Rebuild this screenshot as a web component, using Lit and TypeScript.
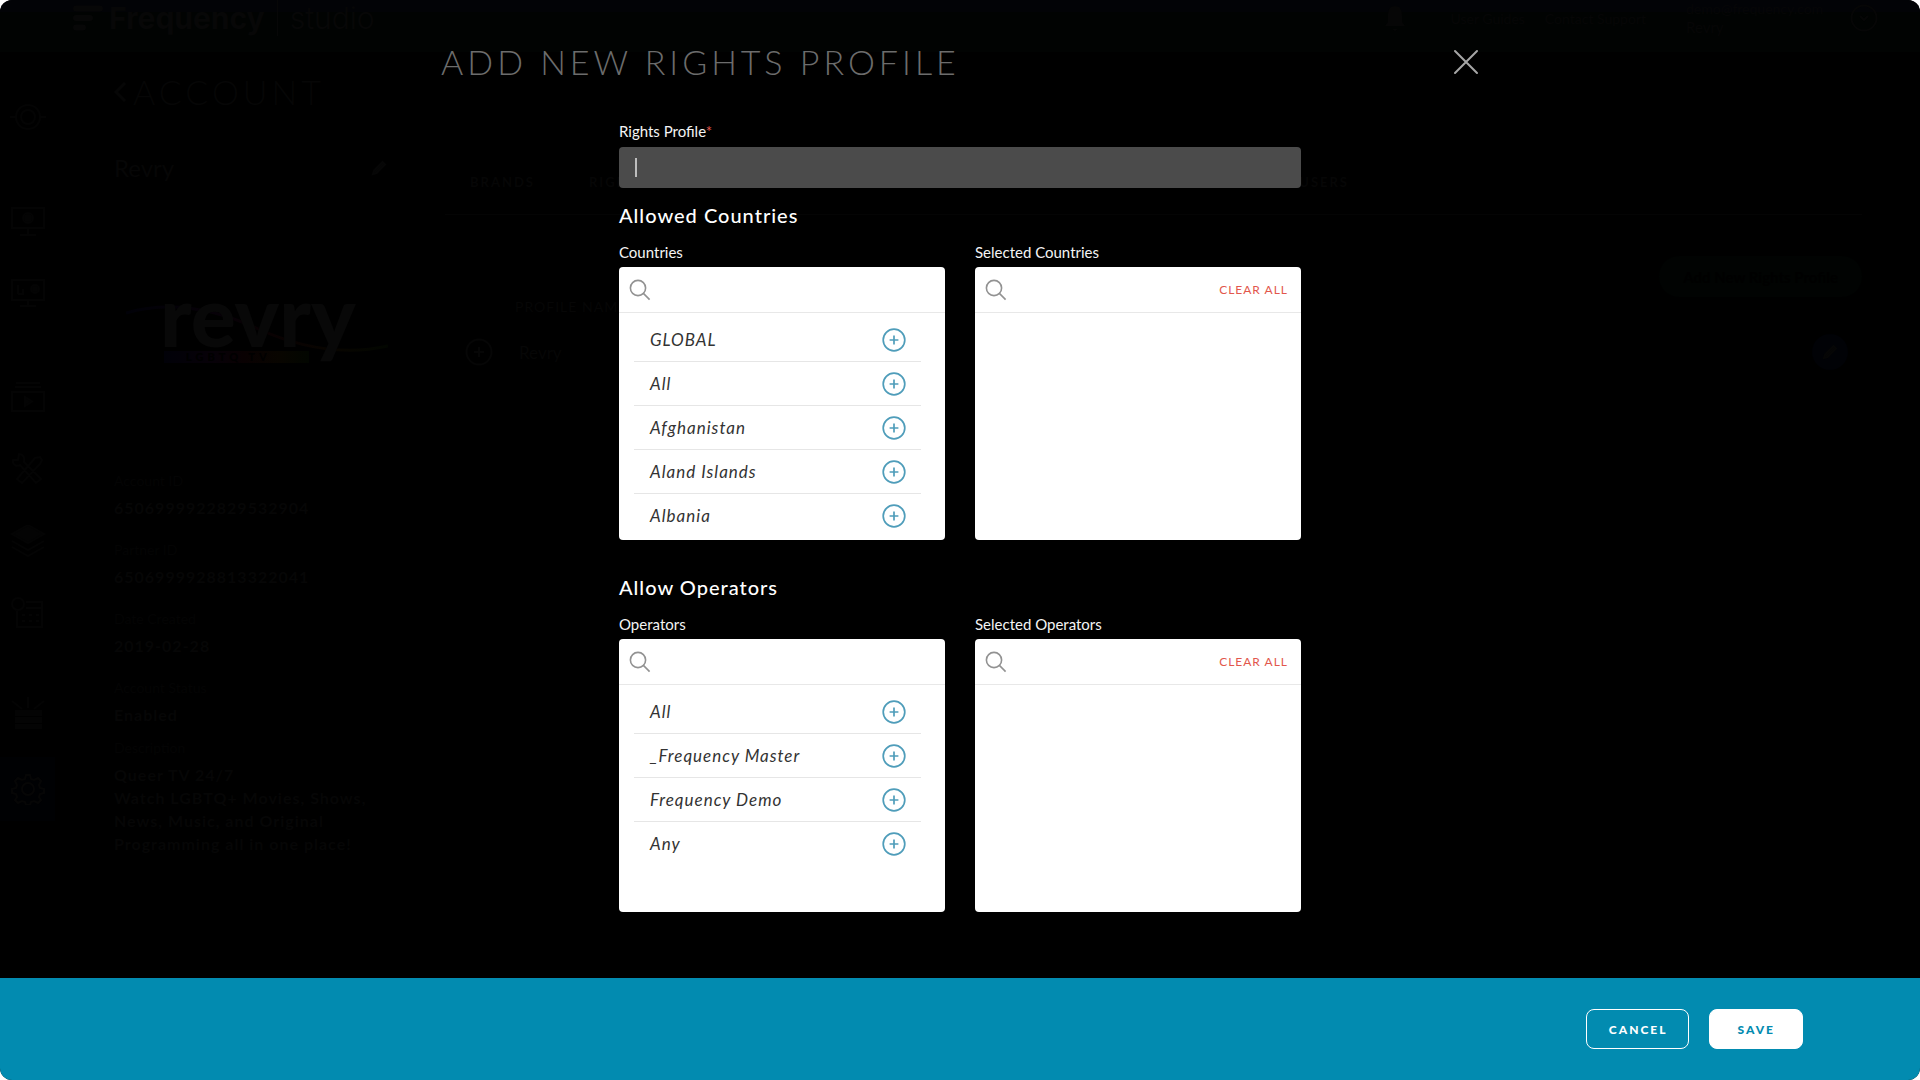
import { LitElement, html, css, svg } from "lit";
import { customElement, property } from "lit/decorators.js";

const searchIcon = html`<svg class="search-icon" width="22" height="22" viewBox="0 0 22 22" aria-hidden="true">
  <circle cx="9" cy="9" r="7.6"></circle><path d="M14.4 14.4 20.6 20.6"></path>
</svg>`;

const plusIcon = html`<svg width="24" height="24" viewBox="0 0 24 24" aria-hidden="true">
  <circle cx="12" cy="12" r="10.8"></circle><path d="M12 7.6v8.8M7.6 12h8.8"></path>
</svg>`;

const pencil = svg`<path d="M2 14 3 10.500 11.500 2 14 4.500 5.500 13Z" fill="currentColor"></path>`;

/* Side navigation glyphs, drawn on a 36 by 32 grid. */
const navIcons = [
  { name: "preview", art: svg`<circle cx="18" cy="16" r="12"></circle><circle cx="18" cy="16" r="7"></circle><path d="M0 16h6M30 16h6"></path>` },
  { name: "player", art: svg`<path d="M2 3h32v20H2zM18 23v6M10 30h16"></path><circle cx="18" cy="13" r="5" fill="currentColor"></circle>` },
  { name: "reports", art: svg`<path d="M2 3h32v20H2zM18 23v5M10 29h16M8 8v9M13 12v5M8 17h6M23 8v8"></path><circle cx="25" cy="12" r="4" fill="currentColor"></circle>` },
  { name: "videos", art: svg`<path d="M6 2h24M5 6h26M2 11h32v19H2z"></path><path d="M15 16v9l7-4.500z" fill="currentColor"></path>` },
  { name: "tools", art: svg`<path d="M9 1l-1 6-5 0C2 12 7 14 10 12l16 18 5-4L14 9C15 4 13 1 9 1zM7 26 25 5l5-1 2 3-2 4L12 30z"></path>` },
  { name: "library", art: svg`<path d="M18 0 34 9 18 18 2 9z" fill="currentColor"></path><path d="M2 16 18 25 34 16M2 22 18 31 34 22"></path>` },
  { name: "calendar", art: svg`<path d="M16 5h16v25H7V14M16 11h16M12 18h3M19 18h3M26 18h3M12 24h3M19 24h3M26 24h3"></path><circle cx="8" cy="7" r="6"></circle>` },
  { name: "data", art: svg`<path d="M18 0v11M2 4l10 8M34 4 24 12"></path><path d="M6 14h25v4H6zM6 21h25v4H6zM6 28h25v3H6z" fill="currentColor"></path>` },
  { name: "settings", art: svg`<path d="M16 2h4l1 4 3 1 4-2 3 3-2 4 1 3 4 1v4l-4 1-1 3 2 3-3 3-4-2-3 1-1 3h-4l-1-3-3-1-4 2-3-3 2-3-1-3-4-1v-4l4-1 1-3-2-4 3-3 4 2 3-1z"></path><circle cx="18" cy="16" r="6"></circle>` },
];

@customElement("picker-list")
export class PickerList extends LitElement {
  @property() label = "";
  @property({ type: Boolean }) clearable = false;
  @property({ attribute: false }) items: string[] = [];

  static styles = css`
    :host { display: block; font-family: Lato, "Open Sans", sans-serif; }
    .caption { display: block; font-size: 15px; line-height: 20px; margin-bottom: 5px; color: #f4f4f4; }
    .card { background: #fff; border-radius: 4px; min-height: 273px; color: #333; overflow: hidden; }
    .bar { display: flex; align-items: center; gap: 8px; height: 45px; padding: 0 13px 0 10px; border-bottom: 1px solid #e8e8e8; }
    .search-icon { flex: none; fill: none; stroke: #929292; stroke-width: 1.6; }
    .field { flex: 1; min-width: 0; height: 30px; border: 0; outline: 0; background: none; font: inherit; font-size: 16px; }
    .clear { border: 0; padding: 0; background: none; color: #e2574c; font: inherit; font-size: 12px; line-height: 16px; letter-spacing: 1px; cursor: pointer; }
    .rows { list-style: none; margin: 0; padding: 5px 24px 2px 15px; }
    .row { display: flex; align-items: center; justify-content: space-between; height: 43px; padding: 0 15px 0 16px; border-bottom: 1px solid #e6e6e6; font-size: 17px; font-style: italic; letter-spacing: 1px; }
    .row:last-child { border-bottom-color: transparent; }
    .add { display: flex; padding: 0; border: 0; background: none; color: #4f9dba; cursor: pointer; }
    .add svg { fill: none; stroke: currentColor; stroke-width: 1.7; }
  `;

  render() {
    return html`
      <label class="caption" for="q">${this.label}</label>
      <div class="card">
        <div class="bar">
          ${searchIcon}
          <input class="field" id="q" type="text" />
          ${this.clearable ? html`<button class="clear" type="button">CLEAR ALL</button>` : ""}
        </div>
        ${this.items.length
          ? html`<ul class="rows">
              ${this.items.map((item) => html`<li class="row"><span>${item}</span><button class="add" type="button" aria-label="Add ${item}">${plusIcon}</button></li>`)}
            </ul>`
          : ""}
      </div>
    `;
  }
}

@customElement("account-page")
export class AccountPage extends LitElement {
  static styles = css`
    :host { display: grid; grid-template-rows: 52px 1fr; font-family: Lato, "Open Sans", sans-serif; color: #060606; background: #000; }
    svg { fill: none; stroke: currentColor; stroke-width: 2; flex: none; }
    a { color: inherit; text-decoration: none; }
    button { font: inherit; color: inherit; border: 0; background: none; padding: 0; }
    .top { display: flex; align-items: flex-start; padding: 0 42px 0 73px; background: linear-gradient(#020306 12px, #010302 12px); }
    .brand { display: flex; align-items: center; height: 36px; gap: 6px; color: #070707; }
    .brand b { font: 700 30px/36px Inter, sans-serif; }
    .brand .product { margin-left: 6px; padding-left: 12px; border-left: 1px solid #070707; font: 300 30px/36px Inter, sans-serif; }
    .links { display: flex; align-items: center; height: 36px; margin-left: auto; font-size: 14px; }
    .links .bell { margin-right: 44px; }
    .links a { margin-right: 20px; }
    .who { display: flex; flex-direction: column; width: 164px; margin-left: 20px; font-size: 14px; line-height: 18px; }
    .who strong { font-size: 15px; font-weight: 400; }
    .body { display: grid; grid-template-columns: 55px 332px 1fr; }
    .nav { display: flex; flex-direction: column; padding-top: 33px; }
    .nav a { display: grid; place-items: center; height: 64px; color: #040404; }
    .nav a + a { margin-top: 8px; }
    .nav a.gap { margin-top: 40px; }
    .nav a.mid { margin-top: 36px; }
    .nav a.on { background: #000103; color: #060606; margin-top: 12px; }
    .side { padding-left: 59px; }
    .title { display: flex; align-items: center; gap: 6px; margin: 18px 0 0; font-weight: 300; font-size: 34px; line-height: 44px; letter-spacing: 4px; white-space: nowrap; }
    .name { display: flex; align-items: center; justify-content: space-between; margin: 38px 0 0; font-size: 24px; line-height: 32px; font-weight: 400; }
    .art { display: block; margin: 16px 0 0 12px; }
    .facts { margin: 9px 0 0; }
    .facts dt { font-size: 14px; line-height: 20px; color: #040404; }
    .facts dd { margin: 5px 0 20px; font-size: 16px; line-height: 24px; font-weight: 700; letter-spacing: 1px; white-space: nowrap; }
    .facts .short { margin-bottom: 11px; }
    .facts .long { line-height: 23px; }
    .main { padding: 110px 58px 0 58px; }
    .tabs { display: flex; max-width: 879px; padding-left: 25px; font-size: 13px; line-height: 40px; font-weight: 700; letter-spacing: 2px; }
    .tabs a { margin-right: 54px; }
    .tabs .end { margin: 0 0 0 auto; }
    .rule { margin: 12px 0 0; border: 0; border-top: 1px solid #040404; }
    .actions { display: flex; justify-content: flex-end; margin-top: 41px; }
    .pill { padding: 0 24px; height: 41px; border-radius: 20px; background: #010302; font-size: 15px; font-weight: 700; color: #000; }
    .cols { padding-left: 70px; font-size: 14px; line-height: 20px; letter-spacing: 1px; }
    .entry { display: flex; align-items: center; height: 70px; padding: 0 14px 0 20px; font-size: 17px; }
    .entry span { margin-left: 26px; }
    .edit { display: grid; place-items: center; width: 36px; height: 36px; margin-left: auto; border-radius: 50%; background: #010206; }
  `;

  render() {
    return html`
      <header class="top">
        <div class="brand">
          <svg width="30" height="26" viewBox="0 0 30 26"><path d="M3 3.500h24M3 13h14M3 22.500h7" stroke-width="6" stroke-linecap="round"></path></svg>
          <b>Frequency</b><span class="product">studio</span>
        </div>
        <div class="links">
          <svg class="bell" width="22" height="28" viewBox="0 0 22 28"><path d="M11 2C5 2 4 7 4 12v6l-3 4h20l-3-4v-6c0-5-1-10-7-10zM8 25h6l-3 2z" fill="currentColor" stroke="none"></path></svg>
          <a href="#guides">User Guides</a><a href="#support">Contact Support</a>
          <div class="who"><span>demo@frequency.com</span><strong>Revry</strong></div>
          <svg width="28" height="28" viewBox="0 0 28 28"><circle cx="14" cy="14" r="12.500"></circle><path d="M10 12l4 4 4-4"></path></svg>
        </div>
      </header>
      <div class="body">
        <nav class="nav">
          ${navIcons.map(({ name, art }, i) => html`<a class=${i === 8 ? "on" : i === 7 ? "mid" : i === 1 || i === 3 ? "gap" : ""} href="#${name}" aria-label=${name}>
            <svg width="36" height="32" viewBox="0 0 36 32">${art}</svg></a>`)}
        </nav>
        <aside class="side">
          <h1 class="title"><svg width="13" height="20" viewBox="0 0 13 20"><path d="M11 1 2 10l9 9" stroke-width="3"></path></svg>ACCOUNT</h1>
          <h2 class="name">Revry <svg width="16" height="16" viewBox="0 0 16 16" stroke="none">${pencil}</svg></h2>
          <svg class="art" width="262" height="262" viewBox="0 0 262 262">
            <defs><linearGradient id="spectrum">
              <stop offset="0" stop-color="#010108"></stop><stop offset=".35" stop-color="#070108"></stop>
              <stop offset=".55" stop-color="#090102"></stop><stop offset=".8" stop-color="#080500"></stop><stop offset="1" stop-color="#020600"></stop>
            </linearGradient></defs>
            <path d="M0 113Q60 96 130 128T262 146" stroke="url(#spectrum)" stroke-width="3"></path>
            <text x="34" y="147" font-family="Lato" font-size="84" font-weight="900" fill="#080808" stroke="none">revry</text>
            <path d="M38 151h145v12H38z" fill="url(#spectrum)" stroke="none"></path>
            <text x="60" y="161" font-family="Lato" font-size="11" font-weight="900" letter-spacing="4" fill="#000" stroke="none">LGBTQ TV</text>
          </svg>
          <dl class="facts">
            <dt>Account ID</dt><dd>6506999922829532904</dd>
            <dt>Partner ID</dt><dd>6506999928813322041</dd>
            <dt>Date Created</dt><dd>2019-02-28</dd>
            <dt>Account Status</dt><dd class="short">Enabled</dd>
            <dt>Description</dt><dd class="long">Queer TV 24/7<br />Watch LGBTQ+ Movies, Shows,<br />News, Music, and Original<br />Programming all in one place!</dd>
          </dl>
        </aside>
        <main class="main">
          <nav class="tabs"><a href="#brands">BRANDS</a><a href="#rights">RIGHTS</a><a class="end" href="#users">USERS</a></nav>
          <hr class="rule" />
          <div class="actions"><button class="pill" type="button">Add New Rights Profile</button></div>
          <div class="cols">PROFILE NAME</div>
          <div class="entry">
            <svg width="28" height="28" viewBox="0 0 28 28"><circle cx="14" cy="14" r="12.500"></circle><path d="M14 9v10M9 14h10"></path></svg>
            <span>Revry</span>
            <button class="edit" type="button" aria-label="Edit"><svg width="16" height="16" viewBox="0 0 16 16" stroke="none">${pencil}</svg></button>
          </div>
        </main>
      </div>
    `;
  }
}

@customElement("app-root")
export class AppRoot extends LitElement {
  private countries = ["GLOBAL", "All", "Afghanistan", "Aland Islands", "Albania"];
  private operators = ["All", "_Frequency Master", "Frequency Demo", "Any"];

  static styles = css`
    :host { display: grid; min-height: 100vh; border-radius: 12px; overflow: hidden; background: #000; font-family: Lato, "Open Sans", sans-serif; color: #fff; }
    .behind, .dialog { grid-area: 1 / 1; min-width: 0; }
    .dialog { position: relative; display: flex; flex-direction: column; }
    .head { display: flex; align-items: center; justify-content: space-between; box-sizing: border-box; width: 100%; max-width: 1038px; margin: 0 auto; padding-top: 38px; }
    .title { margin: 0; font-size: 34px; line-height: 48px; font-weight: 300; letter-spacing: 4px; color: #6c6c6c; }
    .close { display: flex; padding: 0; border: 0; background: none; cursor: pointer; }
    .close svg { stroke: #a6a6a6; stroke-width: 2; stroke-linecap: round; }
    .form { flex: 1; box-sizing: border-box; width: 100%; max-width: 682px; margin: 0 auto; padding: 35px 0 60px; }
    .label { display: block; font-size: 15px; line-height: 20px; margin-bottom: 6px; color: #f4f4f4; }
    .label sup { color: #e2574c; font-size: 15px; line-height: 0; vertical-align: baseline; }
    .box { display: flex; align-items: center; height: 41px; padding-left: 16px; border-radius: 4px; background: #4b4b4b; }
    .caret { width: 2px; height: 19px; background: #bdbdbd; }
    .name { flex: 1; min-width: 0; height: 39px; border: 0; outline: 0; background: none; color: #fff; font: inherit; font-size: 16px; caret-color: transparent; }
    .heading { margin: 13px 0 13px; font-size: 20px; line-height: 28px; font-weight: 500; letter-spacing: 1px; }
    .pair { display: grid; grid-template-columns: 1fr 1fr; gap: 30px; }
    .pair + .heading { margin-top: 33px; }
    .foot { display: flex; align-items: center; justify-content: flex-end; gap: 20px; height: 102px; padding-right: 117px; background: #028bb0; }
    .btn { height: 40px; border: 1px solid #fff; border-radius: 8px; font: inherit; font-size: 12px; font-weight: 900; letter-spacing: 2px; cursor: pointer; }
    .cancel { padding: 0 20px 0 22px; background: none; color: #fff; }
    .save { padding: 0 27px 0 28px; background: #fff; color: #028bb0; }
  `;

  render() {
    return html`
      <account-page class="behind" inert></account-page>
      <section class="dialog" role="dialog" aria-labelledby="title">
        <header class="head">
          <h1 class="title" id="title">ADD NEW RIGHTS PROFILE</h1>
          <button class="close" type="button" aria-label="Close"><svg width="26" height="26" viewBox="0 0 26 26"><path d="M2 2 24 24M24 2 2 24"></path></svg></button>
        </header>
        <form class="form">
          <label class="label" for="profile">Rights Profile<sup>*</sup></label>
          <div class="box"><span class="caret"></span><input class="name" id="profile" type="text" required /></div>
          <h2 class="heading">Allowed Countries</h2>
          <div class="pair">
            <picker-list label="Countries" .items=${this.countries}></picker-list>
            <picker-list label="Selected Countries" clearable></picker-list>
          </div>
          <h2 class="heading">Allow Operators</h2>
          <div class="pair">
            <picker-list label="Operators" .items=${this.operators}></picker-list>
            <picker-list label="Selected Operators" clearable></picker-list>
          </div>
        </form>
        <footer class="foot">
          <button class="btn cancel" type="button">CANCEL</button>
          <button class="btn save" type="button">SAVE</button>
        </footer>
      </section>
    `;
  }
}
